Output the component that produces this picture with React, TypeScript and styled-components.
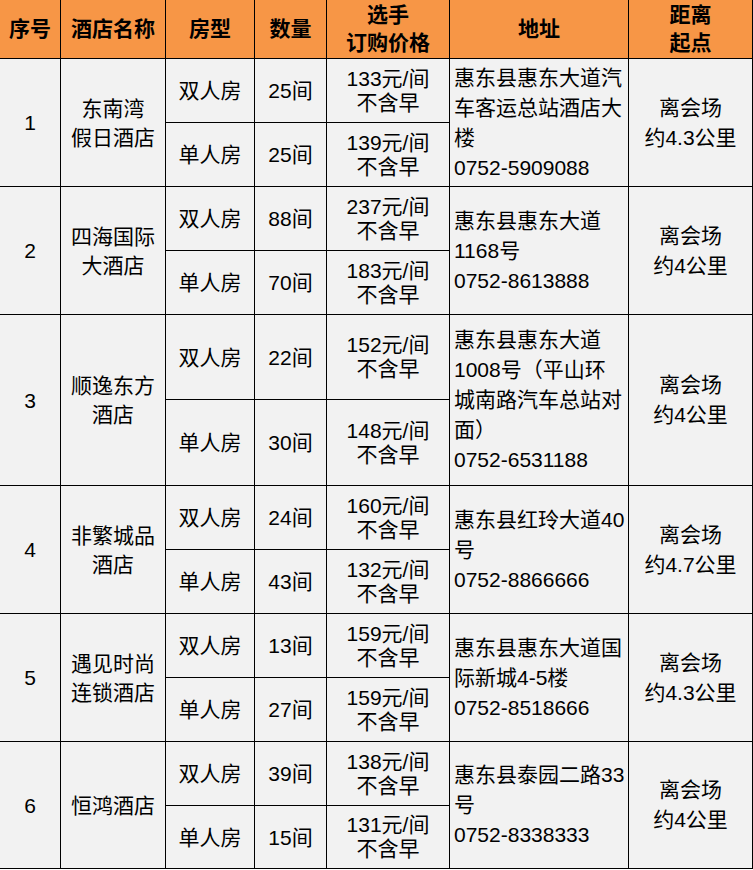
import React from "react";
import styled, { createGlobalStyle } from "styled-components";

const Global = createGlobalStyle`
  html, body { margin: 0; padding: 0; background: #ffffff; }
  body { font-family: "Liberation Sans", "Noto Sans CJK SC", sans-serif; color: #000; }
`;

const Sheet = styled.div`
  width: 753px;
  height: 870px;
  overflow: hidden;
  background: #ffffff;
`;

const Table = styled.table`
  margin: -1px 0 0 -1px;
  border-collapse: collapse;
  table-layout: fixed;
  width: 754px;
  font-family: "Liberation Sans", "Noto Sans CJK SC", sans-serif;
  font-size: 21px;
  color: #000;
`;

const HeadRow = styled.tr`
  height: 59px;
  background: #f79646;
`;

const Row = styled.tr<{ $h: number }>`
  height: ${(p) => p.$h}px;
  background: #f2f2f2;
`;

const Th = styled.th`
  border: 1px solid #000;
  padding: 0;
  font-weight: 700;
  line-height: 28px;
  text-align: center;
  vertical-align: middle;
`;

const Td = styled.td<{ $lh?: number; $align?: "left" | "center" }>`
  border: 1px solid #000;
  padding: 0 ${(p) => (p.$align === "left" ? "0 0 4px" : "0")};
  line-height: ${(p) => p.$lh ?? 29}px;
  text-align: ${(p) => p.$align ?? "center"};
  vertical-align: middle;
  font-weight: 400;
`;

const Line = styled.span`
  display: block;
  white-space: nowrap;
`;

type Room = { type: string; qty: string; price: string };
type Hotel = {
  no: string;
  name: string[];
  rooms: Room[];
  address: string[];
  dist: string[];
  heights: number[];
};

const hotels: Hotel[] = [
  {
    no: "1",
    name: ["东南湾", "假日酒店"],
    rooms: [
      { type: "双人房", qty: "25间", price: "133元/间" },
      { type: "单人房", qty: "25间", price: "139元/间" },
    ],
    address: ["惠东县惠东大道汽", "车客运总站酒店大", "楼", "0752-5909088"],
    dist: ["离会场", "约4.3公里"],
    heights: [64, 64],
  },
  {
    no: "2",
    name: ["四海国际", "大酒店"],
    rooms: [
      { type: "双人房", qty: "88间", price: "237元/间" },
      { type: "单人房", qty: "70间", price: "183元/间" },
    ],
    address: ["惠东县惠东大道", "1168号", "0752-8613888"],
    dist: ["离会场", "约4公里"],
    heights: [64, 64],
  },
  {
    no: "3",
    name: ["顺逸东方", "酒店"],
    rooms: [
      { type: "双人房", qty: "22间", price: "152元/间" },
      { type: "单人房", qty: "30间", price: "148元/间" },
    ],
    address: ["惠东县惠东大道", "1008号（平山环", "城南路汽车总站对", "面）", "0752-6531188"],
    dist: ["离会场", "约4公里"],
    heights: [85, 86],
  },
  {
    no: "4",
    name: ["非繁城品", "酒店"],
    rooms: [
      { type: "双人房", qty: "24间", price: "160元/间" },
      { type: "单人房", qty: "43间", price: "132元/间" },
    ],
    address: ["惠东县红玲大道40", "号", "0752-8866666"],
    dist: ["离会场", "约4.7公里"],
    heights: [64, 64],
  },
  {
    no: "5",
    name: ["遇见时尚", "连锁酒店"],
    rooms: [
      { type: "双人房", qty: "13间", price: "159元/间" },
      { type: "单人房", qty: "27间", price: "159元/间" },
    ],
    address: ["惠东县惠东大道国", "际新城4-5楼", "0752-8518666"],
    dist: ["离会场", "约4.3公里"],
    heights: [64, 64],
  },
  {
    no: "6",
    name: ["恒鸿酒店"],
    rooms: [
      { type: "双人房", qty: "39间", price: "138元/间" },
      { type: "单人房", qty: "15间", price: "131元/间" },
    ],
    address: ["惠东县泰园二路33", "号", "0752-8338333"],
    dist: ["离会场", "约4公里"],
    heights: [64, 63],
  },
];

const colWidths = [61, 105, 89, 72, 123, 179, 124];

const Lines = ({ items }: { items: string[] }) => (
  <>
    {items.map((t, i) => (
      <Line key={i}>{t}</Line>
    ))}
  </>
);

export default function App() {
  return (
    <Sheet>
      <Global />
      <Table>
        <colgroup>
          {colWidths.map((w, i) => (
            <col key={i} style={{ width: w }} />
          ))}
        </colgroup>
        <thead>
          <HeadRow>
            <Th>序号</Th>
            <Th>酒店名称</Th>
            <Th>房型</Th>
            <Th>数量</Th>
            <Th>
              <Lines items={["选手", "订购价格"]} />
            </Th>
            <Th>地址</Th>
            <Th>
              <Lines items={["距离", "起点"]} />
            </Th>
          </HeadRow>
        </thead>
        <tbody>
          {hotels.map((h) =>
            h.rooms.map((r, i) => (
              <Row key={h.no + "-" + i} $h={h.heights[i]}>
                {i === 0 && <Td rowSpan={2}>{h.no}</Td>}
                {i === 0 && (
                  <Td rowSpan={2}>
                    <Lines items={h.name} />
                  </Td>
                )}
                <Td>{r.type}</Td>
                <Td>{r.qty}</Td>
                <Td $lh={24}>
                  <Lines items={[r.price, "不含早"]} />
                </Td>
                {i === 0 && (
                  <Td rowSpan={2} $align="left" $lh={30}>
                    <Lines items={h.address} />
                  </Td>
                )}
                {i === 0 && (
                  <Td rowSpan={2} $lh={30}>
                    <Lines items={h.dist} />
                  </Td>
                )}
              </Row>
            ))
          )}
        </tbody>
      </Table>
    </Sheet>
  );
}
